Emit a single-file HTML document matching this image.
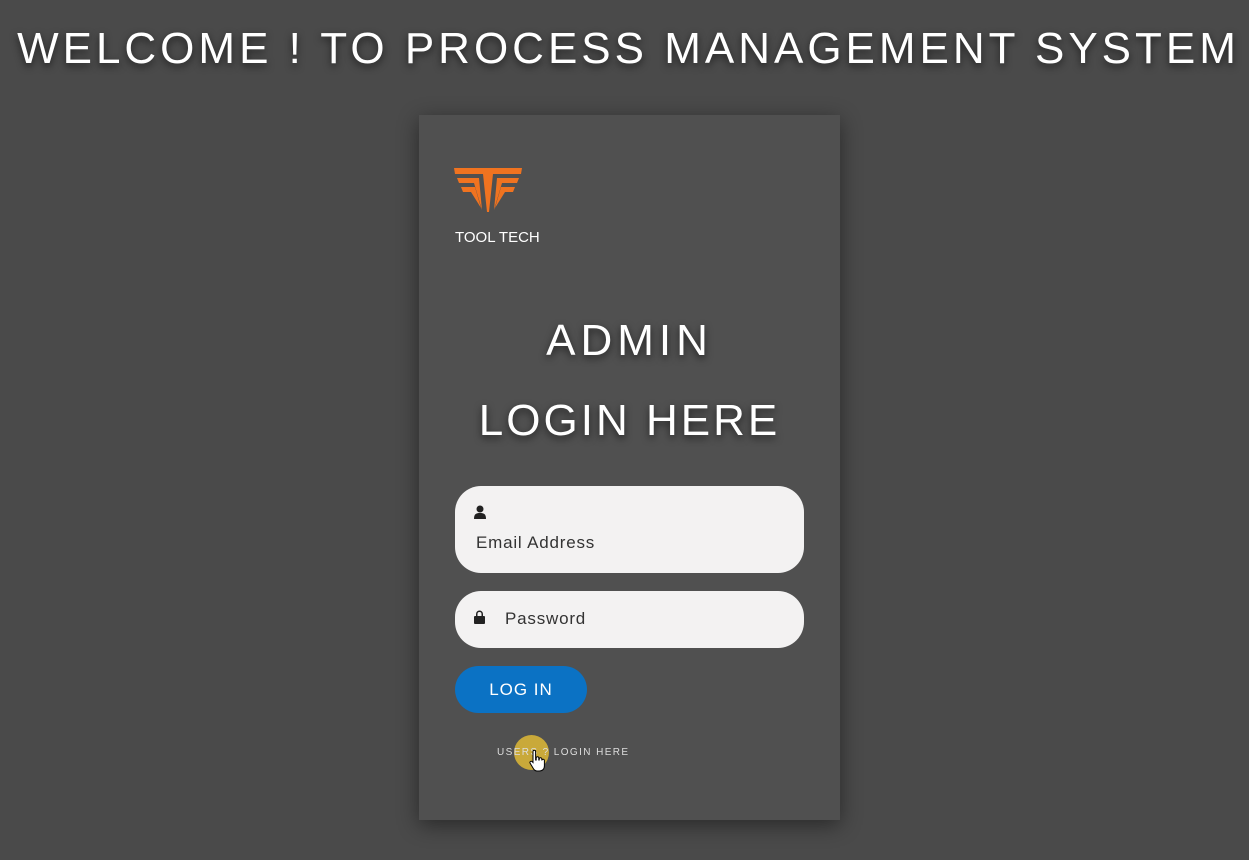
<!DOCTYPE html>
<html><head><style>
body{margin:0;width:1249px;height:860px;background:#4a4a4a;font-family:"Liberation Sans",sans-serif;overflow:hidden;position:relative}
h1{position:absolute;top:24px;left:0;width:1257px;text-align:center;margin:0;font-weight:400;font-size:44px;letter-spacing:4px;color:#fff;text-shadow:0 3px 8px rgba(0,0,0,.6)}
.card{position:absolute;left:419px;top:115px;width:421px;height:705px;background:#505050;box-shadow:0 5px 20px rgba(0,0,0,.45)}
.tt{position:absolute;left:36px;top:114px;color:#fff;font-size:15px}
.t{position:absolute;left:0;width:421px;text-align:center;color:#fff;font-size:44px;letter-spacing:3px;text-shadow:0 3px 8px rgba(0,0,0,.6)}
.in{position:absolute;left:36px;width:349px;background:#f3f2f2;border-radius:26px;color:#333;font-size:17px;letter-spacing:.8px}
.btn{position:absolute;left:36px;top:551px;width:132px;height:47px;border-radius:24px;background:#0b72c4;color:#fff;font-size:17px;letter-spacing:1px;text-align:center;line-height:47px}
.lk{position:absolute;left:78px;top:632px;color:#ddd;font-size:10px;letter-spacing:1.4px}
.dot{position:absolute;left:95px;top:620px;width:35px;height:35px;border-radius:50%;background:#c9a93a}
</style></head><body>
<h1>WELCOME ! TO PROCESS MANAGEMENT SYSTEM</h1>
<div class="card">
<svg style="position:absolute;left:35px;top:53px" width="70" height="46" viewBox="0 0 70 46" fill="#f07320">
<path d="M0 0H68L67 6H39L35 44H33L29 6H1Z"/>
<path d="M3 10H25L28 42L20 15H5Z"/><path d="M7 19H21L27 40L17 24H9Z"/>
<path d="M65 10H43L40 42L48 15H63Z"/><path d="M61 19H47L41 40L51 24H59Z"/>
</svg>
<div class="tt">TOOL TECH</div>
<div class="t" style="top:201px;letter-spacing:5px">ADMIN</div>
<div class="t" style="top:281px">LOGIN HERE</div>
<div class="in" style="top:371px;height:87px">
<svg style="position:absolute;left:19px;top:19px" width="12" height="14" viewBox="0 0 12 14" fill="#222"><circle cx="6" cy="4" r="3.5"/><path d="M0 14C0 9 2 8 6 8S12 9 12 14Z"/></svg>
<div style="position:absolute;left:21px;top:47px">Email Address</div></div>
<div class="in" style="top:476px;height:57px">
<svg style="position:absolute;left:19px;top:19px" width="11" height="14" viewBox="0 0 11 14" fill="#222"><path d="M2 6V4a3.5 3.5 0 0 1 7 0V6H7.5V4a2 2 0 0 0-4 0V6Z"/><rect x="0" y="6" width="11" height="8" rx="1"/></svg>
<div style="position:absolute;left:50px;top:18px">Password</div></div>
<div class="btn">LOG IN</div>
<div class="dot"></div>
<div class="lk">USERS ? LOGIN HERE</div>
<svg style="position:absolute;left:110px;top:635px" width="16" height="22" viewBox="0 0 16 22"><path d="M4 1.5a1.3 1.3 0 0 1 2.6 0V10h.6V8a1.3 1.3 0 0 1 2.6 0v2h.4V9a1.3 1.3 0 0 1 2.6 0v1.5a1.3 1.3 0 0 1 2.6 0V16c0 3-2 5-5 5H8c-2 0-3-1-4-3L1 13a1.3 1.3 0 0 1 2-1.5l1 1Z" fill="#fff" stroke="#000" stroke-width="1"/></svg>
</div>
</body></html>
